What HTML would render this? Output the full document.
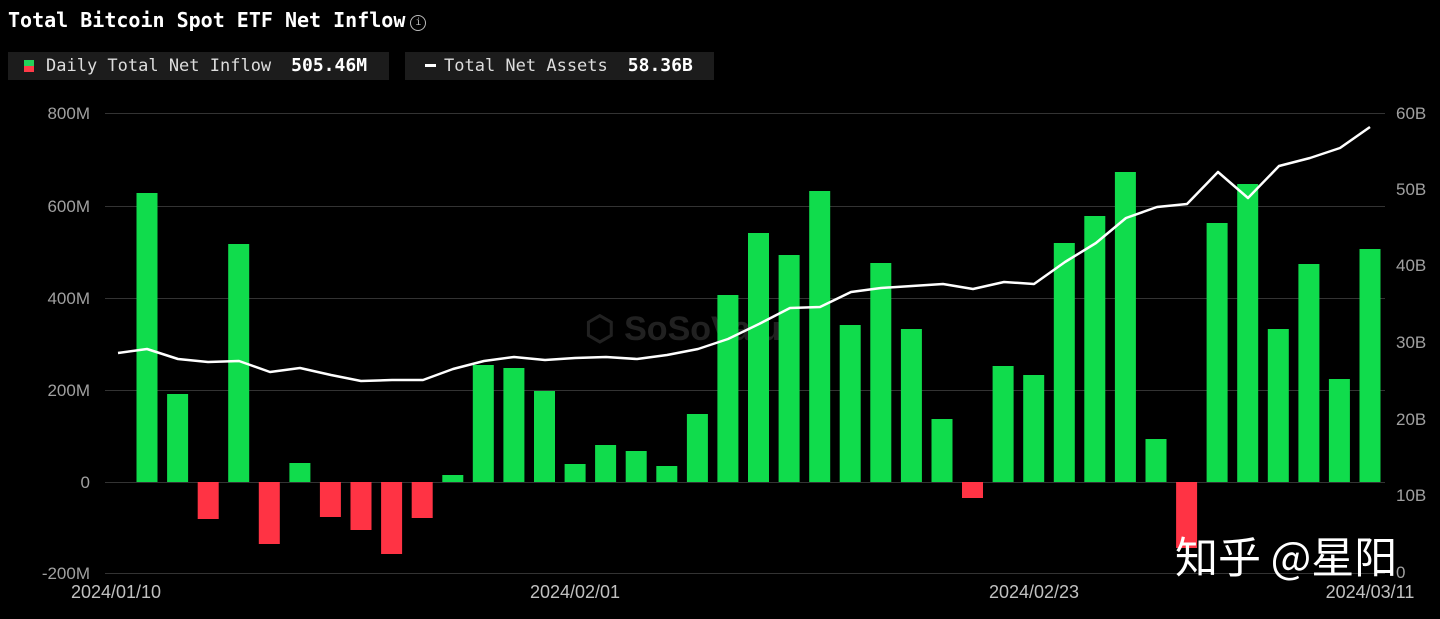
<!DOCTYPE html>
<html><head><meta charset="utf-8"><style>
body{margin:0;background:#000;width:1440px;height:619px;overflow:hidden;font-family:"DejaVu Sans Mono","Liberation Mono",monospace;color:#fff}
.t{position:absolute;left:8px;top:8px;font-size:20px;font-weight:bold;letter-spacing:0px}
.info{display:inline-block;width:14px;height:14px;border:1px solid #bbb;border-radius:50%;font-size:10px;text-align:center;line-height:14px;color:#bbb;font-weight:normal;vertical-align:2px;margin-left:5px}
.box{position:absolute;top:52px;height:28px;background:#1c1c1c;font-size:17px;line-height:28px;color:#ddd;white-space:nowrap}
.box b{color:#fff;font-size:18px;margin-left:20px}
</style></head><body>
<div class="t">Total Bitcoin Spot ETF Net Inflow<span class="info">i</span></div>
<div class="box" style="left:8px;width:381px"><span style="display:inline-block;width:10px;height:12px;background:linear-gradient(#22d25a 50%,#ff3a48 50%);margin:0 12px 0 16px;vertical-align:-1px"></span>Daily Total Net Inflow<b>505.46M</b></div>
<div class="box" style="left:405px;width:309px"><span style="display:inline-block;width:11px;height:3px;background:#fff;margin:0 8px 0 20px;vertical-align:4px"></span>Total Net Assets<b>58.36B</b></div>
<svg width="1440" height="619" style="position:absolute;left:0;top:0" font-family="Liberation Sans, sans-serif">
<g stroke="#333" stroke-width="1">
<line x1="105" x2="1385" y1="113.5" y2="113.5"/><line x1="105" x2="1385" y1="206.5" y2="206.5"/><line x1="105" x2="1385" y1="298.5" y2="298.5"/><line x1="105" x2="1385" y1="390.5" y2="390.5"/><line x1="105" x2="1385" y1="482.5" y2="482.5"/><line x1="105" x2="1385" y1="573.5" y2="573.5"/>
</g>
<g fill="#a0a0a0" font-size="17" text-anchor="end">
<text x="90" y="119">800M</text><text x="90" y="212">600M</text><text x="90" y="304">400M</text><text x="90" y="396">200M</text><text x="90" y="488">0</text><text x="90" y="579">-200M</text>
</g>
<g fill="#a0a0a0" font-size="17">
<text x="1396" y="119">60B</text><text x="1396" y="195">50B</text><text x="1396" y="271">40B</text><text x="1396" y="348">30B</text><text x="1396" y="425">20B</text><text x="1396" y="501">10B</text><text x="1396" y="578">0</text>
</g>
<g fill="#c0c0c0" font-size="18" text-anchor="middle">
<text x="116" y="598">2024/01/10</text><text x="575" y="598">2024/02/01</text><text x="1034" y="598">2024/02/23</text><text x="1370" y="598">2024/03/11</text>
</g>
<text x="585" y="340" fill="#fff" opacity="0.13" font-size="34" font-weight="bold">⬡ SoSoValue</text>
<g fill="#10dc4c">
<rect x="136.5" y="193" width="21" height="289"/><rect x="167.1" y="394" width="21" height="88"/>
<rect x="228.2" y="244" width="21" height="238"/><rect x="289.4" y="463" width="21" height="19"/>
<rect x="442.3" y="475" width="21" height="7"/><rect x="472.8" y="365" width="21" height="117"/>
<rect x="503.4" y="368" width="21" height="114"/><rect x="534" y="391" width="21" height="91"/>
<rect x="564.6" y="464" width="21" height="18"/><rect x="595.1" y="445" width="21" height="37"/>
<rect x="625.7" y="451" width="21" height="31"/><rect x="656.3" y="466" width="21" height="16"/>
<rect x="686.9" y="414" width="21" height="68"/><rect x="717.4" y="295" width="21" height="187"/>
<rect x="748" y="233" width="21" height="249"/><rect x="778.6" y="255" width="21" height="227"/>
<rect x="809.2" y="191" width="21" height="291"/><rect x="839.7" y="325" width="21" height="157"/>
<rect x="870.3" y="263" width="21" height="219"/><rect x="900.9" y="329" width="21" height="153"/>
<rect x="931.5" y="419" width="21" height="63"/><rect x="992.6" y="366" width="21" height="116"/>
<rect x="1023.2" y="375" width="21" height="107"/><rect x="1053.8" y="243" width="21" height="239"/>
<rect x="1084.3" y="216" width="21" height="266"/><rect x="1114.9" y="172" width="21" height="310"/>
<rect x="1145.5" y="439" width="21" height="43"/><rect x="1206.6" y="223" width="21" height="259"/>
<rect x="1237.2" y="184" width="21" height="298"/><rect x="1267.8" y="329" width="21" height="153"/>
<rect x="1298.4" y="264" width="21" height="218"/><rect x="1328.9" y="379" width="21" height="103"/>
<rect x="1359.5" y="249" width="21" height="233"/>
</g>
<g fill="#ff3344">
<rect x="197.7" y="482" width="21" height="37"/><rect x="258.8" y="482" width="21" height="62"/>
<rect x="319.9" y="482" width="21" height="35"/><rect x="350.5" y="482" width="21" height="48"/>
<rect x="381.1" y="482" width="21" height="72"/><rect x="411.7" y="482" width="21" height="36"/>
<rect x="962" y="482" width="21" height="16"/><rect x="1176.1" y="482" width="21" height="66"/>
</g>
<polyline fill="none" stroke="#fff" stroke-width="2.5" stroke-linejoin="round" points="118,353 147,349 178,359 208,362 239,361 270,372 300,368 331,375 361,381 392,380 423,380 453,369 484,361 514,357 545,360 575,358 606,357 637,359 667,355 698,349 728,339 759,324 790,308 820,307 851,292 881,288 912,286 943,284 973,289 1004,282 1034,284 1065,262 1096,243 1126,218 1157,207 1187,204 1218,172 1248,198 1279,166 1310,158 1340,148 1370,127"/>
<text x="1175" y="573" fill="#fff" font-size="43" font-family="Noto Sans CJK SC, sans-serif">知乎 @星阳</text>
</svg>
</body></html>
